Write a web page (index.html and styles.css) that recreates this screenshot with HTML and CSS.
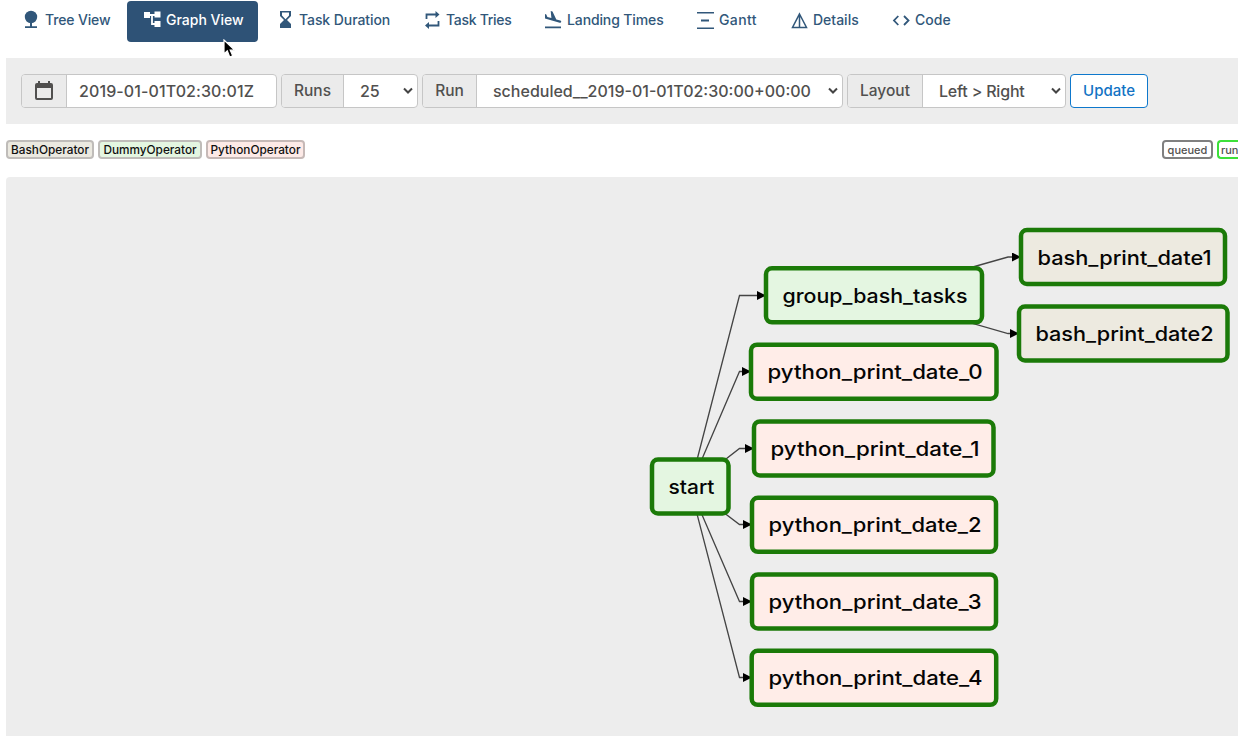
FILE: index.html
```html
<!DOCTYPE html>
<html lang="en">
<head>
<meta charset="utf-8">
<title>Graph View</title>
<link rel="stylesheet" href="styles.css">
</head>
<body>
<nav class="tabs">
  <a class="tab tree"><svg class="icon" viewBox="0 0 20 20"><circle cx="9" cy="7" r="6.200"/><path d="M8 12h2v5H8zM3 16.200h12V18H3z"/></svg><span>Tree View</span></a>
  <a class="tab graph active"><svg class="icon" viewBox="0 0 20 20"><path d="M1 2h6v6H1zM11.500 1.500h6v6h-6zM11.500 11h6v6h-6z"/><path class="stroke" d="M6 5h6M9 5v9H12"/></svg><span>Graph View</span></a>
  <a class="tab duration"><svg class="icon" viewBox="0 0 20 20"><path fill-rule="evenodd" d="M4 1h11v5l-4 4 4 4v4H4v-4l4-4-4-4zM6 2.600v3l3.500 3.600L13 5.600v-3z"/></svg><span>Task Duration</span></a>
  <a class="tab tries"><svg class="icon" viewBox="0 0 20 20"><path d="M12.500 1l4 3.500-4 3.500zM6 12l-4 3.500 4 3.500z"/><path class="stroke" d="M3.500 9V4.500h10M15.500 11v4.500h-10"/></svg><span>Task Tries</span></a>
  <a class="tab landing"><svg class="icon" viewBox="0 0 20 20"><path d="M1 16.500h16v1.700H1zM1 4l1.300.4L3.400 7l4 1.100L6.700 1l1.800.5 3.800 8 4 1.100c1.500.5 1.200 2.500-.6 2.100L1 8.600z"/></svg><span>Landing Times</span></a>
  <a class="tab gantt"><svg class="icon" viewBox="0 0 20 20"><path d="M1 2h17v1.500H1zM5 9.500h8v2H5zM1 17.500h17V19H1z"/></svg><span>Gantt</span></a>
  <a class="tab details"><svg class="icon" viewBox="0 0 20 20"><path class="stroke thin" d="M9.500 4l7 13.500h-14zM9.500 4v13.500"/></svg><span>Details</span></a>
  <a class="tab code"><svg class="icon" viewBox="0 0 20 20"><path class="stroke" d="M6.300 6L2 10.500 6.300 15M12 6l4.500 4.500L12 15"/></svg><span>Code</span></a>
</nav>
<form class="toolbar">
  <div class="group date"><span class="addon"><svg class="cal" viewBox="0 0 18 20"><path fill-rule="evenodd" d="M3 0h2v2h8V0h2v2h1q2 0 2 2v13q0 2-2 2H2q-2 0-2-2V4q0-2 2-2h1zM2 7v10h14V7z"/></svg></span><span class="field"><b>2019-01-01T02:30:01Z</b></span></div>
  <div class="group runs"><span class="addon"><b>Runs</b></span><span class="field"><b>25</b><svg class="chev" viewBox="0 0 10 8"><path d="M1 1.500l4 4 4-4"/></svg></span></div>
  <div class="group run"><span class="addon"><b>Run</b></span><span class="field"><b>scheduled__2019-01-01T02:30:00+00:00</b><svg class="chev" viewBox="0 0 10 8"><path d="M1 1.500l4 4 4-4"/></svg></span></div>
  <div class="group layout"><span class="addon"><b>Layout</b></span><span class="field"><b>Left &gt; Right</b><svg class="chev" viewBox="0 0 10 8"><path d="M1 1.500l4 4 4-4"/></svg></span></div>
  <button type="button" class="update">Update</button>
</form>
<div class="legend">
  <span class="tag bash">BashOperator</span>
  <span class="tag dummy">DummyOperator</span>
  <span class="tag python">PythonOperator</span>
  <span class="tag queued">queued</span>
  <span class="tag running">run</span>
</div>
<main class="canvas">
<svg class="dag" width="1232" height="559" viewBox="6 177 1232 559">
  <defs><marker id="arrow" viewBox="0 0 9 9" refX="8" refY="4.500" markerWidth="9" markerHeight="9" markerUnits="userSpaceOnUse" orient="0"><path d="M0 0l9 4.500-9 4.500z"/></marker></defs>
  <g class="edges">
    <path d="M690 487L739.500 295.500H765"/><path d="M690 487L739.500 371.500H750"/><path d="M690 487L739.500 448.500H753"/><path d="M690 487L739.500 524.500H751"/><path d="M690 487L739.500 601.500H751"/><path d="M690 487L739.500 677.500H751"/><path d="M874 295L1008 257H1020"/><path d="M874 295L1008 333.500H1018"/>
  </g>
  <g class="nodes">
    <rect class="dummy" x="652" y="459.500" width="76.500" height="54" rx="6"/>
    <rect class="dummy" x="766" y="268.300" width="216" height="54" rx="6"/>
    <rect class="python" x="751" y="344.700" width="245.500" height="54" rx="6"/>
    <rect class="python" x="754" y="421.400" width="239.500" height="54" rx="6"/>
    <rect class="python" x="752" y="497.800" width="244" height="54" rx="6"/>
    <rect class="python" x="752" y="574.400" width="244" height="54" rx="6"/>
    <rect class="python" x="751.700" y="650.800" width="244.500" height="54" rx="6"/>
    <rect class="bash" x="1021" y="230" width="204" height="54" rx="6"/>
    <rect class="bash" x="1019" y="306.500" width="208.500" height="54" rx="6"/>
  </g>
  <g class="labels">
    <text x="668.500" y="494" textLength="46" lengthAdjust="spacingAndGlyphs">start</text>
    <text x="782.500" y="303" textLength="185" lengthAdjust="spacingAndGlyphs">group_bash_tasks</text>
    <text x="767.500" y="379" textLength="215" lengthAdjust="spacingAndGlyphs">python_print_date_0</text>
    <text x="770.500" y="456" textLength="209" lengthAdjust="spacingAndGlyphs">python_print_date_1</text>
    <text x="768.500" y="532" textLength="213" lengthAdjust="spacingAndGlyphs">python_print_date_2</text>
    <text x="768.500" y="609" textLength="213" lengthAdjust="spacingAndGlyphs">python_print_date_3</text>
    <text x="768.500" y="685" textLength="214" lengthAdjust="spacingAndGlyphs">python_print_date_4</text>
    <text x="1037.500" y="265" textLength="174" lengthAdjust="spacingAndGlyphs">bash_print_date1</text>
    <text x="1035.500" y="341" textLength="178" lengthAdjust="spacingAndGlyphs">bash_print_date2</text>
  </g>
</svg>
</main>
<svg class="cursor" viewBox="0 0 14 20"><path d="M1 1v14l3.300-3.200L6.700 18l3-1.200-2.500-5.600h4.600z"/></svg>
</body>
</html>
```
FILE: styles.css
```css
* { box-sizing: border-box; }
body { margin: 0; width: 1238px; height: 736px; overflow: hidden; background: #fff; color: #51504f; font: 500 14px/20px Inter, sans-serif; }
.tabs { display: flex; gap: 1px; height: 58px; padding: 1px 0 0 6px; }
.tab { display: flex; align-items: center; flex: none; height: 41px; padding: 0 0 3px 16px; border-radius: 4px; color: #31577a; white-space: nowrap; }
.tab.active { background: #2e5276; color: #fff; }
.icon { width: 20px; height: 20px; margin-right: 3px; fill: currentColor; flex: none; }
.icon .stroke { fill: none; stroke: currentColor; stroke-width: 1.8; }
.icon .thin { stroke-width: 1.5; }
.tree { width: 120px; letter-spacing: -0.15px; }
.graph { width: 131px; }
.duration { width: 147px; padding-left: 17px; letter-spacing: -0.08px; }
.tries { width: 120px; letter-spacing: -0.3px; }
.landing { width: 151px; letter-spacing: -0.12px; }
.gantt { width: 93px; letter-spacing: 0.4px; }
.details { width: 101px; }
.code { width: 90px; }
.toolbar { display: flex; gap: 4px; height: 66px; margin-left: 6px; padding: 16px 15px; background: #ededed; font-size: 16px; }
.group { display: flex; height: 34px; border: 1px solid #c6c6c6; border-radius: 4px; background: #fff; overflow: hidden; }
.group b { font-weight: 500; white-space: nowrap; }
.addon { display: flex; flex: none; align-items: center; justify-content: center; border-right: 1px solid #c6c6c6; background: #ebebeb; }
.field { display: flex; flex: 1; align-items: center; justify-content: space-between; padding: 0 4px 0 16px; }
.date { width: 256px; }
.date .addon { width: 45px; }
.date .field { padding-left: 12px; letter-spacing: 0.1px; }
.runs { width: 137px; }
.runs .addon { width: 62px; font-size: 15.5px; }
.run { width: 421px; }
.run .addon { width: 54px; font-size: 15.5px; }
.layout { width: 219px; }
.layout .addon { width: 75px; font-size: 15.5px; }
.layout .field { letter-spacing: -0.2px; }
.cal { width: 18px; height: 20px; fill: #51504f; }
.chev { width: 10px; height: 8px; fill: none; stroke: #444; stroke-width: 2; }
.update { width: 78px; height: 34px; padding: 0 0 2px; border: 1px solid #0e78cc; border-radius: 4px; background: #fff; color: #1273c4; font: 500 15px Inter, sans-serif; }
.legend { display: flex; gap: 4px; height: 53px; padding: 16px 0 0 6px; font-size: 11.8px; }
.tag { flex: none; height: 19px; border: 2px solid #bfbcb9; border-radius: 4px; color: #111; line-height: 16px; text-align: center; white-space: nowrap; }
.tag.bash { width: 88px; background: #ebe9e0; }
.tag.dummy { width: 104px; background: #e4f6e1; }
.tag.python { width: 99px; background: #fdeae7; border-color: #c6b9b7; }
.tag.queued { width: 51px; margin-left: auto; border-color: gray; color: #51504f; font-size: 11px; }
.tag.running { width: 21px; padding-left: 2px; border-color: #3de03a; border-right: 0; border-radius: 4px 0 0 4px; color: #51504f; font-size: 11px; text-align: left; }
.canvas { height: 559px; margin-left: 6px; background: #ededed; border-radius: 4px 0 0; }
.dag { display: block; }
.edges path { fill: none; stroke: #444; stroke-width: 1.3; marker-end: url(#arrow); }
.nodes rect { stroke: #1b7a08; stroke-width: 4.5; }
.nodes .dummy { fill: #e4f6e1; }
.nodes .python { fill: #ffede8; }
.nodes .bash { fill: #edeae0; }
.labels { font-size: 20px; fill: #050505; }
.cursor { position: absolute; left: 223px; top: 39px; width: 14px; height: 20px; fill: #000; stroke: #fff; stroke-width: 1.2; }
```
